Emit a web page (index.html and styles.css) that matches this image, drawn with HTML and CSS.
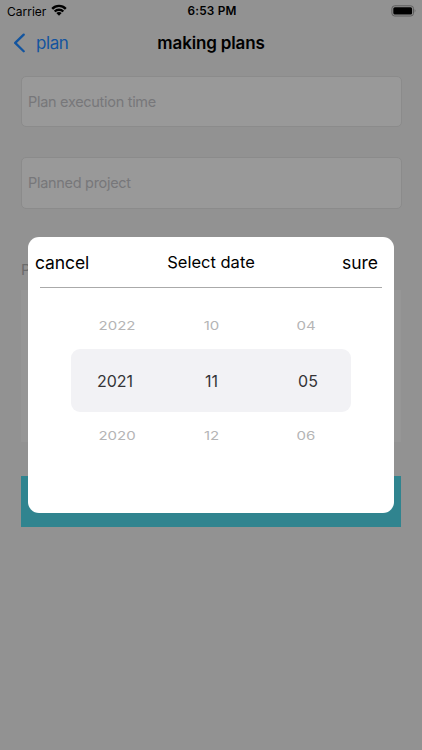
FILE: index.html
```html
<!DOCTYPE html>
<html lang="en">
<head>
<meta charset="utf-8">
<title>making plans</title>
<link rel="stylesheet" href="styles.css">
</head>
<body>
<header class="status">
  <div class="carrier"><span>Carrier</span>
    <svg width="16" height="12" viewBox="0 0 16 12" fill="none" stroke="#000" stroke-width="2.4"><path d="M1.2 4.8C5 .9 11 .9 14.8 4.8M3.7 7.5C6.1 5.1 9.9 5.1 12.3 7.5"/><path d="M8 11.8 5.3 9.1Q8 7 10.7 9.1Z" fill="#000" stroke="none"/></svg>
  </div>
  <time class="clock">6:53 PM</time>
  <svg class="battery" width="26" height="12" viewBox="0 0 26 12"><rect x=".9" y=".8" width="21.6" height="10.2" rx="2.8" fill="none" stroke="#5d5d5d"/><rect x="2.3" y="2.2" width="18.8" height="7.4" rx="1.5"/><path d="M23.7 4.1Q25.3 5.9 23.7 7.8Z" fill="#5d5d5d"/></svg>
</header>
<nav class="nav">
  <a class="back"><svg width="13" height="20" viewBox="0 0 13 20" fill="none" stroke="#12549f" stroke-width="2.3" stroke-linecap="round" stroke-linejoin="round"><path d="M10.7 1.6 2.2 9.9l8.5 8.3"/></svg><span>plan</span></a>
  <h1>making plans</h1>
</nav>
<main class="form">
  <div class="field"><span>Plan execution time</span></div>
  <div class="field"><span>Planned project</span></div>
  <div class="label">P</div>
  <div class="area"></div>
  <div class="submit"></div>
</main>
<section class="dialog">
  <div class="dialog-head"><span class="cancel">cancel</span><span class="title">Select date</span><span class="sure">sure</span></div>
  <div class="picker">
    <div class="row far"><span>2022</span><span>10</span><span>04</span></div>
    <div class="row current"><span>2021</span><span>11</span><span>05</span></div>
    <div class="row far"><span>2020</span><span>12</span><span>06</span></div>
  </div>
</section>
</body>
</html>
```
FILE: styles.css
```css
* { box-sizing: border-box; }
body { margin: 0; width: 422px; height: 750px; overflow: hidden; background: #929292; color: #000; font-family: Inter, "Liberation Sans", sans-serif; }
svg { display: block; }
.status { height: 22px; display: grid; grid-template-columns: 1fr auto 1fr; align-items: center; padding: 0 5px 0 7px; font-size: 12px; }
.carrier { display: flex; align-items: center; gap: 5px; }
.carrier svg { margin-top: -2px; }
.clock { font-weight: 600; font-size: 11.8px; letter-spacing: .2px; justify-self: center; }
.battery { justify-self: end; margin-top: -1px; }
.nav { height: 43px; display: grid; grid-template-columns: 1fr auto 1fr; align-items: center; padding: 0 13px 2px; }
.back { display: flex; align-items: center; gap: 10px; color: #12549f; font-size: 17px; letter-spacing: -.4px; }
h1 { margin: 0; font-size: 17px; font-weight: 600; letter-spacing: -.15px; }
.form { padding: 10.5px 21px 0; }
.field { width: 380.5px; height: 51.5px; margin-bottom: 30px; border: 1px solid #8b8b8b; border-radius: 5px; background: #999; color: #77777a; display: flex; align-items: center; padding-left: 6px; font-size: 14.5px; letter-spacing: -.3px; }
.label { height: 51.5px; display: flex; align-items: center; padding-top: 10px; font-size: 15px; color: #6b6b6b; }
.area { height: 152px; background: #969696; }
.submit { height: 51px; margin-top: 34px; background: #30848f; }
.dialog { position: absolute; left: 28px; top: 237px; width: 366px; height: 275.5px; border-radius: 11px; background: #fff; padding: 0 12px; }
.dialog-head { height: 50.5px; display: grid; grid-template-columns: 1fr auto 1fr; align-items: center; padding-top: 1px; border-bottom: 1px solid #aaa; font-size: 17.5px; }
.cancel { margin-left: -5px; letter-spacing: -.1px; }
.title { font-size: 16.5px; }
.sure { justify-self: end; margin-right: 4px; }
.picker { width: 280px; margin: 15px auto 0; }
.row { display: grid; grid-template-columns: 88px 105px 87px; align-items: center; justify-items: center; }
.far { height: 46px; color: #b5b5b6; font-size: 15px; }
.far span { transform: scaleY(.75); }
.far span:first-child { margin-left: 4px; }
.far span:last-child { margin-right: 3px; }
.current { height: 63.5px; padding-top: 1px; border-radius: 9px; background: #f2f2f5; color: #343437; font-size: 16px; }
.current span:last-child { margin-left: 1px; }
```
